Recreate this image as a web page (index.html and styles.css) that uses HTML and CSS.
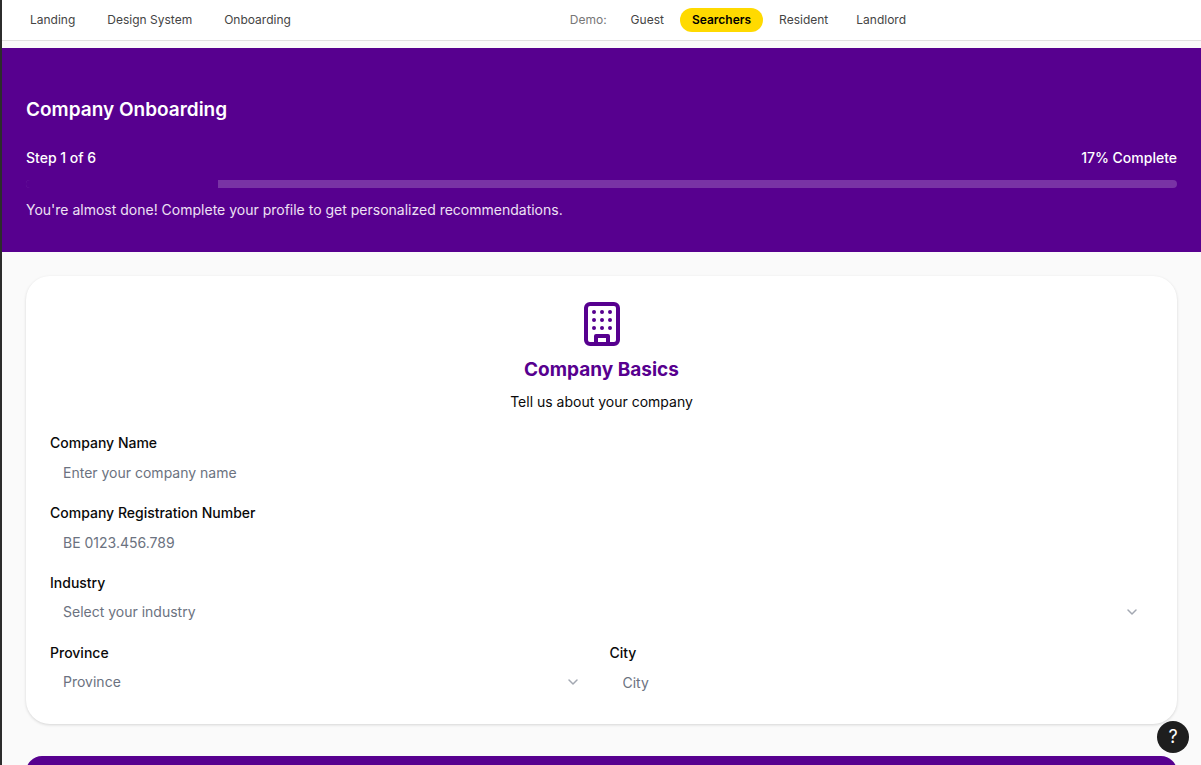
FILE: index.html
```html
<!DOCTYPE html>
<html lang="en">
<head>
  <meta charset="utf-8">
  <meta name="viewport" content="width=device-width, initial-scale=1">
  <title>Company Onboarding</title>
  <link rel="stylesheet" href="styles.css">
</head>
<body>
  <div class="app">
    <header class="topbar">
      <div class="topbar-inner">
        <nav class="links">
          <a class="link" href="#landing">Landing</a>
          <a class="link" href="#design-system">Design System</a>
          <a class="link" href="#onboarding">Onboarding</a>
        </nav>
        <div class="roles">
          <span class="roles-label">Demo:</span>
          <button class="role" type="button">Guest</button>
          <button class="role role-active" type="button">Searchers</button>
          <button class="role" type="button">Resident</button>
          <button class="role" type="button">Landlord</button>
        </div>
      </div>
    </header>

    <main>
      <section class="hero">
        <h1 class="hero-title">Company Onboarding</h1>
        <div class="progress-head">
          <span>Step 1 of 6</span>
          <span>17% Complete</span>
        </div>
        <div class="track" role="progressbar" aria-valuenow="17" aria-valuemin="0" aria-valuemax="100">
          <div class="fill" style="width: 16.67%"></div>
        </div>
        <p class="hero-note">You're almost done! Complete your profile to get personalized recommendations.</p>
      </section>

      <div class="content">
        <form class="card">
          <div class="card-head">
            <svg class="card-icon" viewBox="0 0 24 24" fill="none" stroke="currentColor" stroke-width="2" stroke-linecap="round" stroke-linejoin="round" aria-hidden="true">
              <rect x="4" y="2" width="16" height="20" rx="2"/>
              <path d="M9 22v-4h6v4"/>
              <path d="M8 6h.01M12 6h.01M16 6h.01M8 10h.01M12 10h.01M16 10h.01M8 14h.01M12 14h.01M16 14h.01"/>
            </svg>
            <h2 class="card-title">Company Basics</h2>
            <p class="card-text">Tell us about your company</p>
          </div>

          <div class="fields">
            <div class="field">
              <label class="label" for="company-name">Company Name</label>
              <input class="control" id="company-name" type="text" placeholder="Enter your company name">
            </div>
            <div class="field">
              <label class="label" for="company-number">Company Registration Number</label>
              <input class="control" id="company-number" type="text" placeholder="BE 0123.456.789">
            </div>
            <div class="field">
              <label class="label" for="industry">Industry</label>
              <div class="select-wrap">
                <select class="control select" id="industry"><option>Select your industry</option></select>
                <svg class="chevron" viewBox="0 0 16 16" fill="none" stroke="currentColor" stroke-width="1.5" stroke-linecap="round" stroke-linejoin="round" aria-hidden="true"><path d="M4 6 8 10 12 6"/></svg>
              </div>
            </div>
            <div class="field-row">
              <div class="field">
                <label class="label" for="province">Province</label>
                <div class="select-wrap">
                  <select class="control select" id="province"><option>Province</option></select>
                  <svg class="chevron" viewBox="0 0 16 16" fill="none" stroke="currentColor" stroke-width="1.5" stroke-linecap="round" stroke-linejoin="round" aria-hidden="true"><path d="M4 6 8 10 12 6"/></svg>
                </div>
              </div>
              <div class="field">
                <label class="label" for="city">City</label>
                <input class="control" id="city" type="text" placeholder="City">
              </div>
            </div>
          </div>
        </form>

        <div class="action-panel"></div>
      </div>
    </main>

    <button class="help" type="button">?</button>
  </div>
</body>
</html>
```

FILE: styles.css
```css
* {
  box-sizing: border-box;
}

body {
  margin: 0;
  background: #fafafa;
  color: #0a0a0a;
  font-family: Inter, "Liberation Sans", sans-serif;
  font-size: 14px;
  line-height: 20px;
}

h1, h2, p {
  margin: 0;
}

button, input, select {
  font: inherit;
}

.app {
  height: 100vh;
  overflow: auto;
  scrollbar-width: none;
  border-left: 2px solid #2c2c2c;
}

.topbar {
  margin-bottom: 7px;
  padding: 8px 16px;
  background: #fff;
  border-bottom: 1px solid #e0e0e0;
  font-size: 12px;
  line-height: 16px;
}

.topbar-inner {
  display: flex;
  justify-content: space-between;
  align-items: center;
  max-width: 900px;
}

.links {
  display: flex;
  gap: 8px;
}

.link {
  padding: 4px 12px;
  color: #444;
  text-decoration: none;
}

.roles {
  display: flex;
  align-items: center;
  gap: 4px;
}

.roles-label {
  margin-right: 8px;
  color: #777;
}

.role {
  padding: 4px 12px;
  border: 0;
  border-radius: 12px;
  background: transparent;
  color: #444;
}

.role-active {
  background: #ffda00;
  color: #000;
  font-weight: 600;
}

.hero {
  padding: 48px 24px 32px;
  background: #57008f;
  color: #fff;
}

.hero-title {
  margin-bottom: 24px;
  font-size: 19px;
  font-weight: 600;
  line-height: 28px;
}

.progress-head {
  display: flex;
  justify-content: space-between;
  margin-bottom: 12px;
  font-weight: 500;
}

.track {
  height: 8px;
  margin-bottom: 12px;
  overflow: hidden;
  border-radius: 4px;
  background: #7933a5;
}

.fill {
  height: 100%;
  background: #57008f;
}

.hero-note {
  color: #eee0f4;
}

.content {
  display: flex;
  flex-direction: column;
  gap: 32px;
  padding: 24px;
}

.card {
  padding: 24px;
  border-radius: 24px;
  background: #fff;
  box-shadow: 0 1px 3px rgba(0, 0, 0, 0.15);
}

.card-head {
  display: flex;
  flex-direction: column;
  align-items: center;
  margin-bottom: 21px;
  text-align: center;
}

.card-icon {
  width: 48px;
  height: 48px;
  margin-bottom: 8px;
  color: #57008f;
}

.card-title {
  margin-bottom: 8px;
  color: #57008f;
  font-size: 19px;
  font-weight: 700;
  line-height: 28px;
}

.fields {
  display: grid;
  gap: 13px;
}

.field-row {
  display: grid;
  grid-template-columns: 1fr 1fr;
  gap: 16px;
}

.label {
  display: block;
  margin-bottom: 3px;
  font-weight: 500;
}

.control {
  display: block;
  width: 100%;
  height: 34px;
  padding: 0 13px 2px;
  border: 0;
  border-radius: 8px;
  background: transparent;
  color: #6b7280;
}

.control::placeholder {
  color: #6b7280;
  opacity: 1;
}

.select-wrap {
  position: relative;
}

.select {
  appearance: none;
}

.chevron {
  position: absolute;
  top: 8px;
  right: 13px;
  width: 16px;
  height: 16px;
  color: #a3a8b2;
  pointer-events: none;
}

.action-panel {
  height: 80px;
  border-radius: 16px;
  background: #57008f;
}

.help {
  position: fixed;
  right: 12px;
  bottom: 12px;
  width: 32px;
  height: 32px;
  padding: 0;
  border: 0;
  border-radius: 50%;
  background: #1e1e1e;
  color: #fff;
  font-size: 18px;
  font-weight: 400;
}
```
